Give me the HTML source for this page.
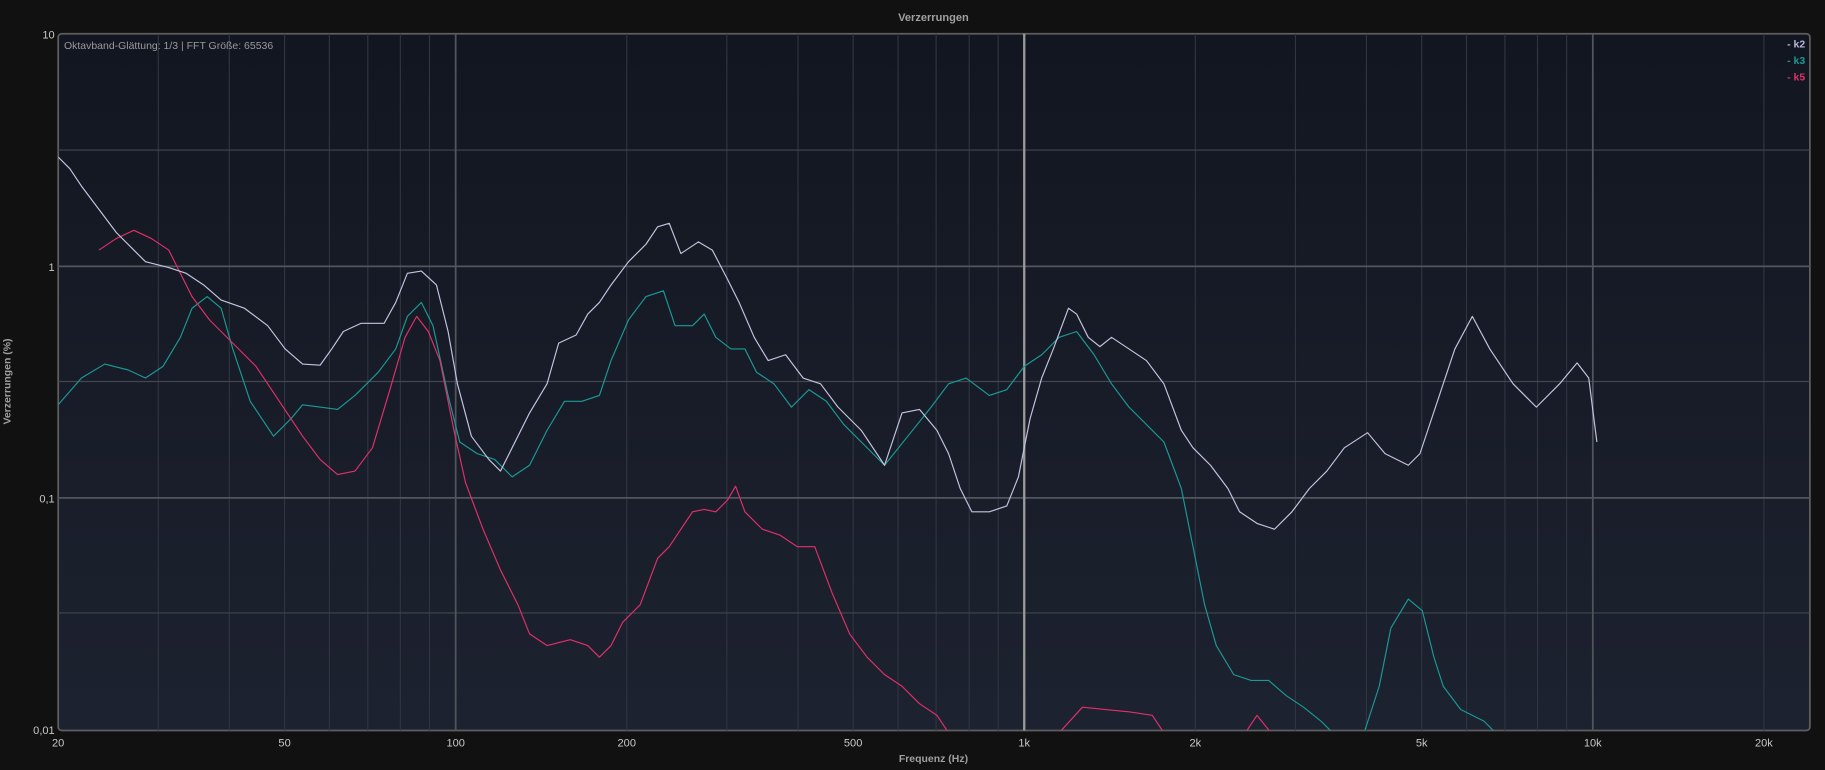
<!DOCTYPE html>
<html><head><meta charset="utf-8"><style>
html,body{margin:0;padding:0;background:#111111;}
svg{display:block;}
text{font-family:"Liberation Sans",sans-serif;}
</style></head><body>
<svg width="1825" height="770" viewBox="0 0 1568 662" preserveAspectRatio="none" xmlns="http://www.w3.org/2000/svg">
<defs><linearGradient id="bg" x1="0" y1="0" x2="0" y2="1"><stop offset="0" stop-color="#121620"/><stop offset="1" stop-color="#1d2230"/></linearGradient>
<clipPath id="c"><rect x="50" y="29" width="1505" height="599"/></clipPath></defs>
<rect width="1568" height="662" fill="#111111"/>
<rect x="50" y="29" width="1505" height="599" rx="3" fill="url(#bg)" stroke="#5e5e5e" stroke-width="1.5"/>
<g stroke="#2f3440" stroke-width="1">
<path d="M136 29V628M197 29V628M244.5 29V628M283 29V628M316 29V628M344 29V628M369 29V628M538.5 29V628M624.5 29V628M685.6 29V628M733 29V628M771.6 29V628M804.3 29V628M832.7 29V628M857.6 29V628M1027 29V628M1113 29V628M1174 29V628M1221.5 29V628M1260 29V628M1293 29V628M1321 29V628M1346 29V628M1515.5 29V628"/>
<path d="M50 129H1555M50 328H1555M50 527H1555" stroke="#41464f"/>
</g>
<g stroke="#51555d" stroke-width="1.5"><path d="M391.5 29V628M1368.5 29V628M50 229H1555M50 428H1555"/></g>
<path d="M880 29V628" stroke="#9a9a9a" stroke-width="2"/>
<g clip-path="url(#c)" fill="none" stroke-width="1" stroke-linejoin="round">
<polyline stroke="#1a9a94" points="50,348 70,325 90,313 110,318 125,325 140,315 155,290 165,265 178,255 190,265 200,300 215,345 235,375 250,360 260,348 275,350 290,352 305,340 325,320 340,300 350,272 362,260 372,280 385,340 395,380 410,390 425,395 440,410 455,400 470,370 485,345 500,345 515,340 525,310 540,275 555,255 570,250 580,280 595,280 605,270 615,290 628,300 640,300 650,320 665,330 680,350 695,335 710,345 725,365 740,380 760,400 780,375 800,350 815,330 830,325 850,340 865,335 880,315 895,305 910,290 925,285 940,305 955,330 970,350 985,365 1000,380 1015,420 1025,470 1035,520 1045,555 1060,580 1075,585 1090,585 1105,598 1120,608 1135,620 1145,630"/>
<polyline stroke="#1a9a94" points="1172,630 1185,590 1195,540 1210,515 1222,525 1232,565 1240,590 1255,610 1275,620 1285,630"/>
<polyline stroke="#e0306a" points="85,215 100,205 115,198 130,205 145,215 155,235 165,255 180,275 200,295 220,315 240,345 260,375 275,395 290,408 305,405 320,385 335,335 348,290 358,272 368,285 378,310 390,370 400,415 415,455 430,490 445,520 455,545 470,555 490,550 505,555 515,565 525,555 535,535 550,520 565,480 575,470 585,455 595,440 605,438 615,440 625,430 632,418 640,440 655,455 670,460 685,470 700,470 715,510 730,545 745,565 760,580 775,590 790,605 805,615 815,630"/>
<polyline stroke="#e0306a" points="910,630 930,608 950,610 970,612 990,615 1000,630"/>
<polyline stroke="#e0306a" points="1070,630 1080,615 1092,630"/>
<polyline stroke="#c4c4e0" points="50,135 60,145 70,160 85,180 100,200 115,215 125,225 145,230 160,235 175,245 190,258 210,265 230,280 245,300 260,313 275,314 285,300 295,285 310,278 330,278 340,260 350,235 362,233 375,245 385,285 393,330 405,375 420,395 430,405 440,385 455,355 470,330 480,295 495,288 505,270 515,260 525,245 540,225 555,210 565,195 575,192 585,218 600,208 612,215 625,240 635,260 648,290 660,310 675,305 690,325 705,330 720,350 740,370 760,400 775,355 790,352 805,370 815,390 825,420 835,440 850,440 865,435 875,410 885,360 895,325 905,300 918,265 925,270 935,290 945,298 955,290 970,300 985,310 1000,330 1015,370 1025,385 1040,400 1055,420 1065,440 1080,450 1095,455 1110,440 1125,420 1140,405 1155,385 1175,372 1190,390 1210,400 1220,390 1235,345 1250,300 1265,272 1280,300 1300,330 1320,350 1340,330 1355,312 1365,325 1372,380"/>
</g>
<text x="55" y="42" font-size="9" fill="#9a9a9a">Oktavband-Glättung: 1/3 | FFT Größe: 65536</text>
<text x="802" y="18" font-size="9.5" font-weight="bold" fill="#a0a0a0" text-anchor="middle">Verzerrungen</text>
<g font-size="9.5" fill="#c8c8c8" text-anchor="end"><text x="47" y="33">10</text><text x="47" y="233">1</text><text x="47" y="432">0,1</text><text x="47" y="631">0,01</text></g>
<g font-size="9.5" fill="#c8c8c8" text-anchor="middle"><text x="50" y="642">20</text><text x="244.5" y="642">50</text><text x="391.5" y="642">100</text><text x="538.5" y="642">200</text><text x="733" y="642">500</text><text x="880" y="642">1k</text><text x="1027" y="642">2k</text><text x="1221.5" y="642">5k</text><text x="1368.5" y="642">10k</text><text x="1515.5" y="642">20k</text></g>
<text x="802" y="655" font-size="9" font-weight="bold" fill="#a0a0a0" text-anchor="middle">Frequenz (Hz)</text>
<text transform="translate(9,328) rotate(-90)" font-size="9" font-weight="bold" fill="#a0a0a0" text-anchor="middle">Verzerrungen (%)</text>
<g font-size="9" font-weight="bold" text-anchor="end"><text x="1551" y="41" fill="#b8b8d8">- k2</text><text x="1551" y="55" fill="#1a9a94">- k3</text><text x="1551" y="69" fill="#e0306a">- k5</text></g>
</svg>
</body></html>
